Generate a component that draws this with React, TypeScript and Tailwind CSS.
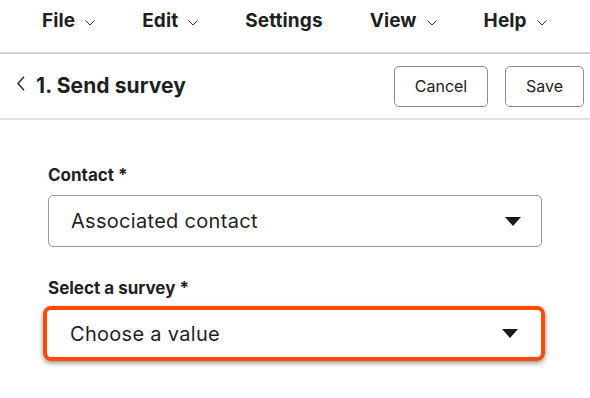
const menu = [
  { label: 'File', caret: true },
  { label: 'Edit', caret: true },
  { label: 'Settings', caret: false },
  { label: 'View', caret: true },
  { label: 'Help', caret: true },
];

function Caret() {
  return (
    <svg width="16" height="9" viewBox="0 0 16 9" className="shrink-0">
      <path d="M0 0h16L8 9z" fill="#1a1a1a" />
    </svg>
  );
}

function SmallChevron() {
  return (
    <svg width="10" height="6" viewBox="0 0 10 6" className="shrink-0 mt-[3px]">
      <path d="M0.5 0.5L5 5L9.5 0.5" fill="none" stroke="#333" strokeWidth="1" />
    </svg>
  );
}

export default function App() {
  return (
    <div className="w-[590px] h-[398px] bg-white overflow-hidden text-[#1f1f1f]" style={{ fontFamily: 'Inter, "Noto Sans", sans-serif' }}>
      {/* top menu */}
      <div className="h-[54px] flex items-start pt-[9px] pl-[42px] gap-[47px] border-b-2 border-[#d3d3d3]">
        {menu.map((m) => (
          <div key={m.label} className="flex items-center gap-[10px]">
            <span className="text-[19px] font-bold leading-[24px] tracking-[0.1px]">{m.label}</span>
            {m.caret && <SmallChevron />}
          </div>
        ))}
      </div>

      {/* header */}
      <div className="h-[66px] flex items-center justify-between pl-[17px] pr-[6px] border-b-2 border-[#e3e3e3]">
        <div className="flex items-center gap-[11px]">
          <svg width="8" height="15" viewBox="0 0 8 15" className="shrink-0 -mt-[5px]">
            <path d="M7 0.8L1 7.5L7 14.2" fill="none" stroke="#222" strokeWidth="1.4" />
          </svg>
          <span className="text-[21px] font-bold tracking-[0.1px]">1. Send survey</span>
        </div>
        <div className="flex items-center gap-[17px]">
          <button className="w-[94px] h-[41px] rounded-[5px] border border-[#8f8f8f] text-[16px] text-[#222]">Cancel</button>
          <button className="w-[79px] h-[41px] rounded-[5px] border border-[#8f8f8f] text-[16px] text-[#222]">Save</button>
        </div>
      </div>

      {/* form */}
      <div className="pl-[48px] pt-[44px] w-[542px]">
        <div className="text-[17px] font-bold leading-[22px] mb-[9px]">Contact *</div>
        <div className="h-[52px] rounded-[5px] border border-[#9a9a9a] flex items-center justify-between pl-[22px] pr-[20px]">
          <span className="text-[20px] tracking-[0.3px]">Associated contact</span>
          <Caret />
        </div>

        <div className="text-[17px] font-bold leading-[22px] mt-[30px] mb-[7px]">Select a survey *</div>
        <div className="-ml-[5px] -mr-[3px] h-[55px] rounded-[8px] border-4 border-[#ff4a00] shadow-[0_2px_5px_rgba(0,0,0,0.45)] flex items-center justify-between pl-[23px] pr-[23px]">
          <span className="text-[20px] tracking-[0.3px]">Choose a value</span>
          <Caret />
        </div>
      </div>
    </div>
  );
}
